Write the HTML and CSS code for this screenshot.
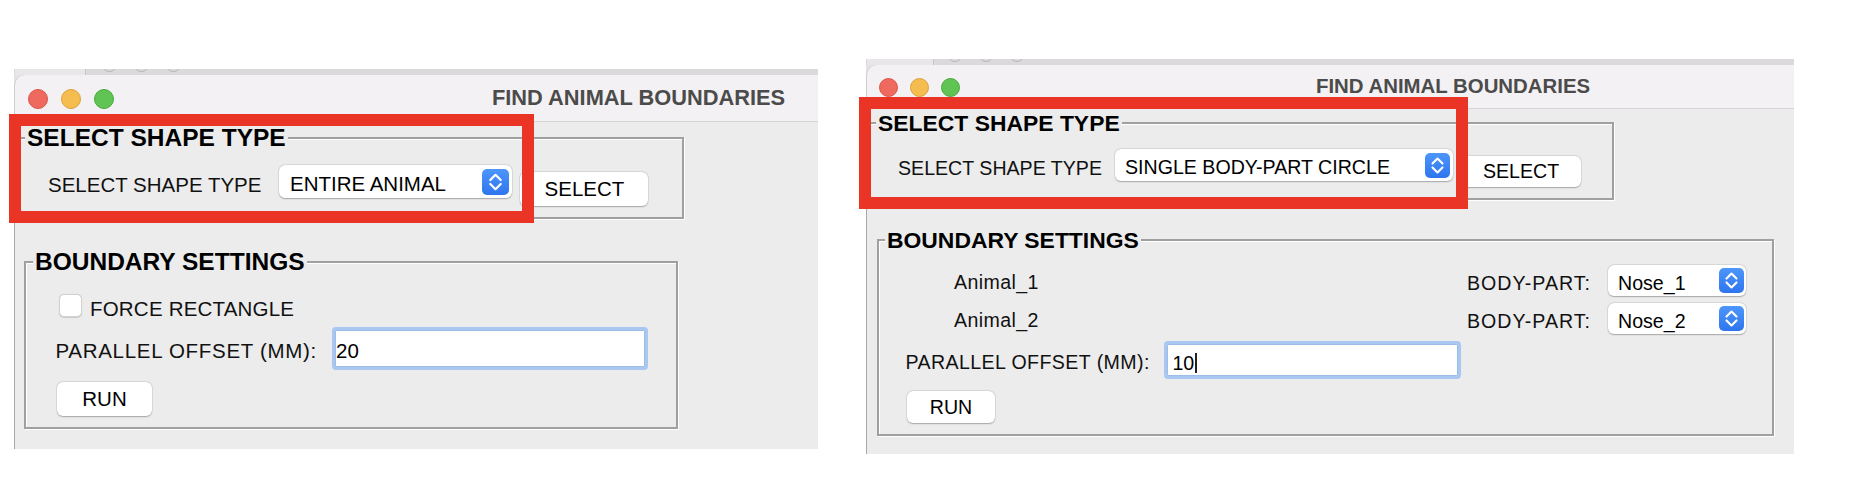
FILE: index.html
```html
<!DOCTYPE html>
<html lang="en">
<head>
<meta charset="utf-8">
<title>Find Animal Boundaries</title>
<link rel="stylesheet" href="styles.css">
</head>
<body>
<div class="desk">
  <section class="win win-a">
    <div class="backstrip"><span class="patch"></span><span class="ghosts"><i class="ghost"></i><i class="ghost"></i><i class="ghost"></i></span></div>
    <header class="titlebar">
      <div class="lights"><span class="light red"></span><span class="light yellow"></span><span class="light green"></span></div>
      <div class="title">FIND ANIMAL BOUNDARIES</div>
    </header>
    <div class="content">
      <fieldset class="group shape-group">
        <legend>SELECT SHAPE TYPE</legend>
        <div class="row">
          <span class="lbl shape-lbl">SELECT SHAPE TYPE</span>
          <div class="select shape-select">
            <span class="select-text">ENTIRE ANIMAL</span>
            <span class="stepper"><svg viewBox="0 0 26 26"><path d="M7.8 11 13 5.8 18.2 11M7.8 15 13 20.2 18.2 15" fill="none" stroke="#fff" stroke-width="2.2" stroke-linecap="round" stroke-linejoin="round"/></svg></span>
          </div>
          <button class="btn select-btn">SELECT</button>
        </div>
      </fieldset>
      <fieldset class="group bound-group">
        <legend>BOUNDARY SETTINGS</legend>
        <div class="row check-row"><span class="checkbox"></span><span class="lbl check-lbl">FORCE RECTANGLE</span></div>
        <div class="row param-row"><span class="lbl param-lbl">PARALLEL OFFSET (MM):</span><div class="entry"><span class="entry-text">20</span></div></div>
        <div class="row run-row"><button class="btn run-btn">RUN</button></div>
      </fieldset>
    </div>
    <div class="highlight"></div>
  </section>

  <section class="win win-b">
    <div class="backstrip"><span class="patch"></span><span class="ghosts"><i class="ghost"></i><i class="ghost"></i><i class="ghost"></i></span></div>
    <header class="titlebar">
      <div class="lights"><span class="light red"></span><span class="light yellow"></span><span class="light green"></span></div>
      <div class="title">FIND ANIMAL BOUNDARIES</div>
    </header>
    <div class="content">
      <fieldset class="group shape-group">
        <legend>SELECT SHAPE TYPE</legend>
        <div class="row">
          <span class="lbl shape-lbl">SELECT SHAPE TYPE</span>
          <div class="select shape-select">
            <span class="select-text">SINGLE BODY-PART CIRCLE</span>
            <span class="stepper"><svg viewBox="0 0 26 26"><path d="M7.8 11 13 5.8 18.2 11M7.8 15 13 20.2 18.2 15" fill="none" stroke="#fff" stroke-width="2.2" stroke-linecap="round" stroke-linejoin="round"/></svg></span>
          </div>
          <button class="btn select-btn">SELECT</button>
        </div>
      </fieldset>
      <fieldset class="group bound-group">
        <legend>BOUNDARY SETTINGS</legend>
        <div class="row part-row part-row-first">
          <span class="lbl animal-lbl">Animal_1</span>
          <div class="part-pick">
            <span class="lbl part-lbl">BODY-PART:</span>
            <div class="select part-select">
              <span class="select-text">Nose_1</span>
              <span class="stepper"><svg viewBox="0 0 26 26"><path d="M7.8 11 13 5.8 18.2 11M7.8 15 13 20.2 18.2 15" fill="none" stroke="#fff" stroke-width="2.2" stroke-linecap="round" stroke-linejoin="round"/></svg></span>
            </div>
          </div>
        </div>
        <div class="row part-row">
          <span class="lbl animal-lbl">Animal_2</span>
          <div class="part-pick">
            <span class="lbl part-lbl">BODY-PART:</span>
            <div class="select part-select">
              <span class="select-text">Nose_2</span>
              <span class="stepper"><svg viewBox="0 0 26 26"><path d="M7.8 11 13 5.8 18.2 11M7.8 15 13 20.2 18.2 15" fill="none" stroke="#fff" stroke-width="2.2" stroke-linecap="round" stroke-linejoin="round"/></svg></span>
            </div>
          </div>
        </div>
        <div class="row param-row"><span class="lbl param-lbl">PARALLEL OFFSET (MM):</span><div class="entry"><span class="entry-text">10<span class="caret"></span></span></div></div>
        <div class="row run-row"><button class="btn run-btn">RUN</button></div>
      </fieldset>
    </div>
    <div class="highlight"></div>
  </section>
</div>
</body>
</html>
```

FILE: styles.css
```css
* { box-sizing: border-box; }

html, body {
  margin: 0;
  padding: 0;
  background: #ffffff;
}

body {
  width: 1850px;
  height: 502px;
  overflow: hidden;
  font-family: "Liberation Sans", Arial, sans-serif;
  color: #000;
}

.desk {
  display: flex;
  align-items: flex-start;
  padding-left: 14px;
}

/* ---------- window ---------- */
.win {
  position: relative;
  display: flex;
  flex-direction: column;
  background: linear-gradient(#e4e2e4 0, #e4e2e4 18px, transparent 18px);
}

.win-a {
  width: 804px;
  margin-top: 69px;
  font-size: 20.5px;
  line-height: 24px;
}

.win-b {
  width: 928px;
  margin-top: 59px;
  margin-left: 48px;
  font-size: 19.6px;
  line-height: 23px;
}

.backstrip {
  height: 6px;
  background: #dcd9dc;
  display: flex;
  overflow: hidden;
}

.patch {
  flex: none;
  margin-left: 1px;
  background: #e8e6e8;
  border-right: 1px solid #c9c6c9;
}

.win-a .patch { width: 71px; }
.win-b .patch { width: 67px; }

.ghosts {
  display: flex;
}

.ghost {
  flex: none;
  border-radius: 50%;
  border: 1px solid #b7b4b7;
}

.win-a .ghosts { gap: 17px; margin-left: 16px; }
.win-a .ghost { width: 15px; height: 15px; margin-top: -12px; }
.win-b .ghosts { gap: 17px; margin-left: 14px; }
.win-b .ghost { width: 14px; height: 14px; margin-top: -11px; }

.titlebar {
  display: flex;
  align-items: flex-start;
  background: #f4f1f4;
  border-bottom: 1px solid #d7d4d7;
  border-radius: 10px 0 0 0;
  box-shadow: inset 1px 0 0 #cfcccf;
}

.win-a .titlebar { height: 47px; }
.win-b .titlebar { height: 44px; }

.lights { display: flex; }

.light {
  display: block;
  border-radius: 50%;
}

.red { background: #ee6a5e; border: 1px solid #dc5448; }
.yellow { background: #f5bd4f; border: 1px solid #dca23a; }
.green { background: #5fc453; border: 1px solid #48a93d; }

.win-a .lights { gap: 13px; margin: 14px 0 0 14px; }
.win-a .light { width: 20px; height: 20px; }
.win-b .lights { gap: 12px; margin: 12.5px 0 0 13px; }
.win-b .light { width: 19px; height: 19px; }

.title {
  font-weight: bold;
  color: #4b4b4b;
  white-space: nowrap;
}

.win-a .title { font-size: 21.8px; line-height: 26px; margin: 9.5px 0 0 378px; }
.win-b .title { font-size: 20.4px; line-height: 24px; margin: 9px 0 0 356px; }

.content {
  flex: 1;
  display: flex;
  flex-direction: column;
  align-items: flex-start;
  background: #ececec;
  border-left: 1px solid #a8a8a8;
}

.win-a .content { padding-bottom: 20px; }
.win-b .content { padding-bottom: 18px; }

/* ---------- groups ---------- */
.group {
  margin: 0;
  padding: 0;
  min-width: 0;
  border: 2px solid #a0a0a0;
  box-shadow: 1px 1px 0 #ffffff, inset 1px 1px 0 #ffffff;
  padding-bottom: 11px;
}

.group legend {
  font-weight: bold;
  color: #000;
  padding: 0 2px;
  background: #ececec;
  white-space: nowrap;
}

.win-a .group legend { font-size: 24.5px; line-height: 28px; margin-left: 7px; }
.win-b .group legend { font-size: 22.9px; line-height: 26px; margin-left: 6px; }

.win-a .shape-group { margin: 2px 0 0 1px; width: 668px; }
.win-a .bound-group { margin: 29px 0 0 9px; width: 654px; }
.win-b .shape-group { margin: 1px 0 0 1px; width: 746px; }
.win-b .bound-group { margin: 27px 0 0 10px; width: 897px; }

.row {
  display: flex;
  align-items: flex-start;
}

.lbl {
  flex: none;
  white-space: nowrap;
  color: #111;
}

/* ---------- controls ---------- */
.select {
  flex: none;
  display: flex;
  align-items: flex-start;
  background: #ffffff;
  border-radius: 6px;
  box-shadow: 0 0.5px 1.5px rgba(0, 0, 0, 0.28), 0 0 0 0.5px rgba(0, 0, 0, 0.07);
}

.select-text {
  margin-top: 6.5px;
  white-space: nowrap;
  color: #000;
}

.stepper {
  align-self: center;
  margin-left: auto;
  border-radius: 5px;
  background: linear-gradient(#4d96fb, #2e75ee);
  display: flex;
}

.stepper svg { width: 100%; height: 100%; display: block; }

.btn {
  flex: none;
  font: inherit;
  color: #000;
  background: #ffffff;
  border: none;
  border-radius: 6px;
  padding: 0;
  display: flex;
  align-items: center;
  justify-content: center;
  box-shadow: 0 0.5px 1.5px rgba(0, 0, 0, 0.28), 0 0 0 0.5px rgba(0, 0, 0, 0.07);
}

.checkbox {
  flex: none;
  background: #ffffff;
  border-radius: 5px;
  border: 1px solid #d2d2d2;
  box-shadow: 0 0.5px 1px rgba(0, 0, 0, 0.15);
}

.entry {
  flex: none;
  display: flex;
  align-items: flex-start;
  background: #ffffff;
  border: 3px solid #a8c8f2;
  border-radius: 4px;
  box-shadow: inset 0 0 0 1px #9dbde9;
}

.entry-text {
  color: #000;
  white-space: nowrap;
}

.caret {
  display: inline-block;
  width: 1.5px;
  height: 20px;
  margin-left: 1px;
  vertical-align: -3px;
  background: #222;
}

/* ---------- window A layout ---------- */
.win-a .shape-lbl { margin: 21px 0 0 30px; }
.win-a .shape-select { margin: 13px 0 0 18px; width: 233px; height: 33px; }
.win-a .shape-select .select-text { padding-left: 10.5px; }
.win-a .shape-select .stepper { width: 27px; height: 26px; margin-right: 3px; }
.win-a .select-btn { margin: 20px 0 0 8px; width: 128px; height: 34px; }

.win-a .check-row { margin-top: 18px; height: 23px; }
.win-a .checkbox { margin-left: 33px; width: 23px; height: 23px; }
.win-a .check-lbl { margin: 3px 0 0 8px; letter-spacing: 0.2px; }
.win-a .param-row { margin-top: 10px; }
.win-a .param-lbl { margin: 12px 0 0 29.5px; letter-spacing: 0.7px; }
.win-a .entry { margin-left: 15px; width: 316px; height: 43px; }
.win-a .entry-text { margin: 9px 0 0 1px; }
.win-a .run-row { margin-top: 12px; }
.win-a .run-btn { margin-left: 31px; width: 95px; height: 34px; }

.win-a .highlight { left: -5px; top: 45px; width: 525px; height: 109px; }

/* ---------- window B layout ---------- */
.win-b .shape-lbl { margin: 21px 0 0 28px; }
.win-b .shape-select { margin: 13px 0 0 13px; width: 338px; height: 32px; }
.win-b .shape-select .select-text { padding-left: 10px; }
.win-b .shape-select .stepper { width: 25px; height: 25px; margin-right: 3px; }
.win-b .select-btn { margin: 20px 0 0 8px; width: 120px; height: 31px; }

.part-row { justify-content: space-between; margin-top: 7px; }
.part-row-first { margin-top: 12px; }
.animal-lbl { margin: 6px 0 0 75px; letter-spacing: 0.4px; }
.part-pick { display: flex; align-items: flex-start; margin-right: 26px; }
.part-lbl { margin-top: 7px; letter-spacing: 1px; }
.part-select { margin-left: 17px; width: 138px; height: 31px; }
.part-select .select-text { padding-left: 10px; }
.part-select .stepper { width: 25px; height: 25px; margin-right: 2px; }

.win-b .param-row { margin-top: 7px; }
.win-b .param-lbl { margin: 10px 0 0 26.5px; letter-spacing: 0.4px; }
.win-b .entry { margin-left: 14.6px; width: 297px; height: 38px; }
.win-b .entry-text { margin: 7.7px 0 0 5px; }
.win-b .run-row { margin-top: 12px; }
.win-b .run-btn { margin-left: 28px; width: 88px; height: 32px; }

.win-b .highlight { left: -7px; top: 38px; width: 609px; height: 112px; }

/* ---------- annotation overlay ---------- */
.highlight {
  position: absolute;
  border: 12px solid #e93426;
  pointer-events: none;
}
```
